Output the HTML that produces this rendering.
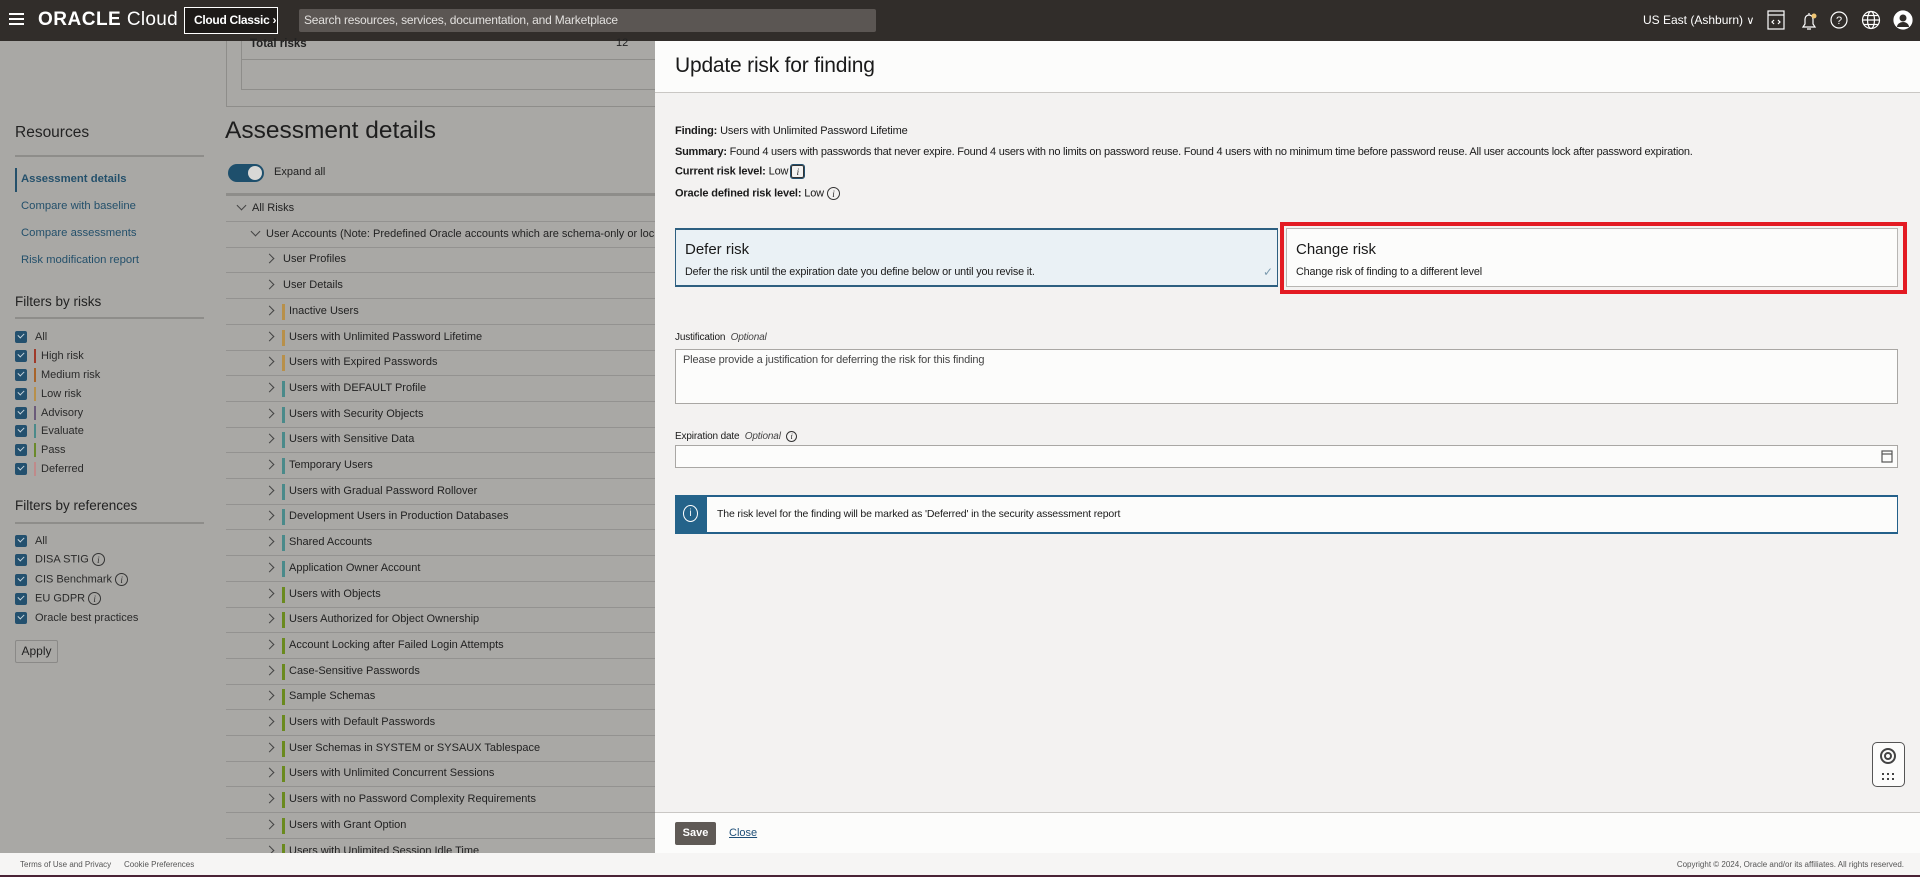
<!DOCTYPE html>
<html><head><meta charset="utf-8"><style>
*{box-sizing:border-box;margin:0;padding:0}
body{width:1920px;height:877px;overflow:hidden;font-family:"Liberation Sans",Arial,sans-serif;background:#a9a8a5;position:relative;color:#1a1a1a}
.abs{position:absolute}
.top{left:0;top:0;width:1920px;height:41px;background:#312d2a}
.side a{position:absolute;left:21px;font-size:11.3px;color:#24506b;text-decoration:none;white-space:nowrap}
.h{position:absolute;font-size:15.5px;color:#222}
.line{position:absolute;left:15px;width:189px;height:2px;background:#8e8d8a}
.cb{position:absolute;left:15px;width:12px;height:12px;background:#23506e;border-radius:2px}
.cb:after{content:"";position:absolute;left:3px;top:2px;width:5px;height:3px;border-left:1.5px solid #c9d6dd;border-bottom:1.5px solid #c9d6dd;transform:rotate(-45deg)}
.cl{position:absolute;font-size:11px;color:#2a2a2a;white-space:nowrap}
.bar{position:absolute;width:2px;height:14px}
.row{position:absolute;left:226px;width:429px;height:26px;border-bottom:1px solid #939290;font-size:11px;color:#222;white-space:nowrap}
.row span{position:absolute;top:6px}
.chev{position:absolute;top:8px;width:7px;height:7px;border-right:1.3px solid #444;border-bottom:1.3px solid #444;transform:rotate(-45deg)}
.chevd{transform:rotate(45deg);top:6px}
.rb{position:absolute;top:5px;width:3px;height:16px}
.panel{left:655px;top:41px;width:1265px;height:812px;background:#f3f2f1}
.p{position:absolute;font-size:11px;color:#1a1a1a;white-space:nowrap;letter-spacing:-0.15px}
.info{display:inline-block;width:13px;height:13px;border:1px solid #333;border-radius:50%;font-size:9px;text-align:center;line-height:12px;font-style:italic;font-family:"Liberation Serif",serif;vertical-align:middle}
</style></head><body>
<div class="abs top"></div>
<div class="abs" style="left:9px;top:13px;width:15px;height:2px;background:#fff;box-shadow:0 5px 0 #fff,0 10px 0 #fff"></div>
<div class="abs" style="left:38px;top:9px;color:#fff;font-size:19px;white-space:nowrap;letter-spacing:0.3px"><b style="font-weight:700;letter-spacing:0.5px">ORACLE</b> <span style="font-weight:400">Cloud</span></div>
<div class="abs" style="left:184px;top:7px;width:94px;height:27px;border:1px solid #fff;background:#1d1a18;color:#fff;font-size:12px;font-weight:bold;line-height:25px;padding-left:9px;letter-spacing:-0.3px">Cloud Classic ›</div>
<div class="abs" style="left:299px;top:9px;width:577px;height:23px;background:#5b5653;border-radius:2px;color:#e2e0de;font-size:12px;line-height:23px;padding-left:5px;letter-spacing:-0.2px">Search resources, services, documentation, and Marketplace</div>
<div class="abs" style="left:1643px;top:13px;color:#fff;font-size:12px;white-space:nowrap">US East (Ashburn) <span style="font-size:11px">∨</span></div>
<svg class="abs" style="left:1766px;top:10px" width="150" height="22" viewBox="0 0 150 22" fill="none" stroke="#fff" stroke-width="1.2">
<rect x="2" y="1" width="16" height="18"/><line x1="2" y1="5" x2="18" y2="5"/><path d="M8 10l-2 2 2 2M12 10l2 2-2 2"/>
<path d="M37 17h12l-2-3v-5a4 4 0 0 0-8 0v5zM41 19h4M43 3v2"/><circle cx="48" cy="6" r="2.5" fill="#f0c674" stroke="none"/>
<circle cx="73" cy="10" r="8"/><text x="73" y="14" font-size="11" fill="#fff" stroke="none" text-anchor="middle" font-family="Liberation Sans">?</text>
<circle cx="105" cy="10" r="8.5"/><ellipse cx="105" cy="10" rx="3.5" ry="8.5"/><line x1="96.5" y1="10" x2="113.5" y2="10"/><line x1="98" y1="5.5" x2="112" y2="5.5"/><line x1="98" y1="14.5" x2="112" y2="14.5"/>
<circle cx="137" cy="10" r="9" fill="#fff"/><circle cx="137" cy="8" r="3.5" fill="#312d2a" stroke="none"/><path d="M131 17a6 5 0 0 1 12 0" fill="#312d2a" stroke="none"/>
</svg>

<div class="h" style="left:15px;top:124px">Resources</div>
<div class="line" style="top:155px"></div>
<div class="abs" style="left:15px;top:168px;width:2px;height:24px;background:#24506b"></div>
<div class="side"><a style="top:173px;font-weight:bold">Assessment details</a><a style="top:200px">Compare with baseline</a><a style="top:227px">Compare assessments</a><a style="top:254px">Risk modification report</a></div>
<div class="h" style="left:15px;top:294px;font-size:13.5px">Filters by risks</div>
<div class="line" style="top:317px"></div>
<div class="cb" style="top:331px"></div><div class="cl" style="left:35px;top:331px">All</div>
<div class="cb" style="top:350px"></div><div class="bar" style="left:34px;top:349px;background:#a03a2a"></div><div class="cl" style="left:41px;top:350px">High risk</div>
<div class="cb" style="top:369px"></div><div class="bar" style="left:34px;top:368px;background:#a8642a"></div><div class="cl" style="left:41px;top:369px">Medium risk</div>
<div class="cb" style="top:388px"></div><div class="bar" style="left:34px;top:387px;background:#b8904a"></div><div class="cl" style="left:41px;top:388px">Low risk</div>
<div class="cb" style="top:407px"></div><div class="bar" style="left:34px;top:406px;background:#6a5a7a"></div><div class="cl" style="left:41px;top:407px">Advisory</div>
<div class="cb" style="top:425px"></div><div class="bar" style="left:34px;top:424px;background:#4a8a8a"></div><div class="cl" style="left:41px;top:425px">Evaluate</div>
<div class="cb" style="top:444px"></div><div class="bar" style="left:34px;top:443px;background:#6a8a2a"></div><div class="cl" style="left:41px;top:444px">Pass</div>
<div class="cb" style="top:463px"></div><div class="bar" style="left:34px;top:462px;background:#c08a8a"></div><div class="cl" style="left:41px;top:463px">Deferred</div>
<div class="h" style="left:15px;top:498px;font-size:13.5px">Filters by references</div>
<div class="line" style="top:522px"></div>
<div class="cb" style="top:535px"></div><div class="cl" style="left:35px;top:535px">All</div>
<div class="cb" style="top:554px"></div><div class="cl" style="left:35px;top:553px">DISA STIG <span class="info">i</span></div>
<div class="cb" style="top:574px"></div><div class="cl" style="left:35px;top:573px">CIS Benchmark <span class="info">i</span></div>
<div class="cb" style="top:593px"></div><div class="cl" style="left:35px;top:592px">EU GDPR <span class="info">i</span></div>
<div class="cb" style="top:612px"></div><div class="cl" style="left:35px;top:612px">Oracle best practices</div>
<div class="abs" style="left:15px;top:640px;width:43px;height:23px;border:1px solid #8a8987;border-radius:2px;font-size:12px;line-height:21px;text-align:center;color:#222">Apply</div>

<div class="abs" style="left:226px;top:41px;width:440px;height:66px;border-left:1px solid #8e8d8a;border-bottom:1px solid #8e8d8a"></div>
<div class="abs" style="left:241px;top:41px;width:420px;height:49px;border-left:1px solid #8e8d8a;border-bottom:1px solid #8e8d8a"></div>
<div class="abs" style="left:241px;top:59px;width:420px;height:1px;background:#8e8d8a"></div>
<div class="abs" style="left:250px;top:38px;font-size:11.5px;font-weight:bold;color:#222">Total risks</div>
<div class="abs" style="left:616px;top:37px;font-size:11px;color:#222">12</div>
<div class="abs" style="left:225px;top:117px;font-size:24.5px;color:#1e1e1e">Assessment details</div>
<div class="abs" style="left:228px;top:164px;width:36px;height:18px;border-radius:9px;background:#1e4f6c"></div>
<div class="abs" style="left:248px;top:166px;width:14px;height:14px;border-radius:50%;background:#d8d8d6"></div>
<div class="abs" style="left:274px;top:166px;font-size:11px;color:#222">Expand all</div>
<div class="abs" style="left:226px;top:193px;width:430px;height:3px;background:#8e8d8a"></div>
<div id="rows"></div>

<div class="abs panel">
 <div class="abs" style="left:0;top:0;width:1265px;height:52px;background:#fcfcfb;border-bottom:1px solid #c9c7c4"></div>
 <div class="abs" style="left:20px;top:13px;font-size:21px;color:#1a1a1a;letter-spacing:-0.2px">Update risk for finding</div>
 <div class="p" style="left:20px;top:84px"><b>Finding:</b> Users with Unlimited Password Lifetime</div>
 <div class="p" style="left:20px;top:105px;letter-spacing:-0.25px"><b>Summary:</b> Found 4 users with passwords that never expire. Found 4 users with no limits on password reuse. Found 4 users with no minimum time before password reuse. All user accounts lock after password expiration.</div>
 <div class="p" style="left:20px;top:124px"><b>Current risk level:</b> Low <span class="info" style="border-radius:2px;outline:1px solid #23506e">i</span></div>
 <div class="p" style="left:20px;top:146px"><b>Oracle defined risk level:</b> Low <span class="info">i</span></div>
 <div class="abs" style="left:20px;top:187px;width:603px;height:59px;background:#eaf1f5;border:1px solid #2d5f80;border-width:2px 1px 2px 1px"></div>
 <div class="abs" style="left:30px;top:200px;font-size:15px;color:#1a1a1a">Defer risk</div>
 <div class="p" style="left:30px;top:225px;font-size:10.8px">Defer the risk until the expiration date you define below or until you revise it.</div>
 <div class="abs" style="left:608px;top:224px;font-size:12px;color:#7a9aae">✓</div>
 <div class="abs" style="left:625px;top:181px;width:627px;height:72px;border:4px solid #e31b23"></div>
 <div class="abs" style="left:631px;top:187px;width:612px;height:59px;background:#fcfcfb;border:1px solid #b8b6b3"></div>
 <div class="abs" style="left:641px;top:200px;font-size:15px;color:#1a1a1a">Change risk</div>
 <div class="p" style="left:641px;top:225px;font-size:10.8px">Change risk of finding to a different level</div>
 <div class="p" style="left:20px;top:291px;font-size:10px">Justification &nbsp;<i style="color:#444">Optional</i></div>
 <div class="abs" style="left:20px;top:308px;width:1223px;height:55px;background:#fcfcfb;border:1px solid #a9a7a4"></div>
 <div class="p" style="left:28px;top:313px;color:#444">Please provide a justification for deferring the risk for this finding</div>
 <div class="p" style="left:20px;top:390px;font-size:10px">Expiration date &nbsp;<i style="color:#444">Optional</i> &nbsp;<span class="info" style="width:11px;height:11px;line-height:10px;font-size:8px">i</span></div>
 <div class="abs" style="left:20px;top:404px;width:1223px;height:23px;background:#fcfcfb;border:1px solid #a9a7a4"></div>
 <svg class="abs" style="left:1226px;top:408px" width="12" height="14" fill="none" stroke="#555" stroke-width="1.2"><rect x="1" y="2" width="10" height="11"/><line x1="1" y1="5" x2="11" y2="5"/></svg>
 <div class="abs" style="left:20px;top:454px;width:1223px;height:39px;background:#fcfcfb;border:1px solid #23608a;border-width:2px 1px 2px 1px"></div>
 <div class="abs" style="left:20px;top:454px;width:32px;height:39px;background:#24638a"></div>
 <div class="abs" style="left:28px;top:464px;width:15px;height:17px;border:1.2px solid #fff;border-radius:50%;color:#fff;font-size:10px;text-align:center;line-height:15px">i</div>
 <div class="p" style="left:62px;top:467px;font-size:10.5px">The risk level for the finding will be marked as 'Deferred' in the security assessment report</div>
 <div class="abs" style="left:1217px;top:701px;width:33px;height:45px;background:#fcfcfb;border:1.5px solid #555;border-radius:5px"></div>
 <svg class="abs" style="left:1223px;top:705px" width="20" height="38" fill="none" stroke="#444" stroke-width="2"><circle cx="10" cy="10" r="7"/><circle cx="10" cy="10" r="3"/><path d="M4 28h2M9 28h2M14 28h2M4 33h2M9 33h2M14 33h2"/></svg>
 <div class="abs" style="left:0;top:771px;width:1265px;height:41px;background:#fcfcfb;border-top:1px solid #c9c7c4"></div>
 <div class="abs" style="left:20px;top:781px;width:41px;height:23px;background:#5f5a56;border-radius:2px;color:#fff;font-size:11px;font-weight:bold;text-align:center;line-height:23px">Save</div>
 <div class="abs" style="left:74px;top:786px;font-size:11px;color:#1f4f78;text-decoration:underline">Close</div>
</div>

<div class="abs" style="left:0;top:853px;width:1920px;height:22px;background:#f6f5f4"></div>
<div class="abs" style="left:20px;top:860px;font-size:8px;color:#555">Terms of Use and Privacy</div>
<div class="abs" style="left:124px;top:860px;font-size:8px;color:#555">Cookie Preferences</div>
<div class="abs" style="right:16px;top:860px;font-size:8px;color:#555">Copyright © 2024, Oracle and/or its affiliates. All rights reserved.</div>
<div class="abs" style="left:0;top:875px;width:1920px;height:2px;background:#4a2336"></div>

<script>
var R=[["All Risks",0,""],["User Accounts (Note: Predefined Oracle accounts which are schema-only or locked are not included in this report)",1,""],["User Profiles",2,""],["User Details",2,""],["Inactive Users",2,"#b8904a"],["Users with Unlimited Password Lifetime",2,"#b8904a"],["Users with Expired Passwords",2,"#b8904a"],["Users with DEFAULT Profile",2,"#4a8a8a"],["Users with Security Objects",2,"#4a8a8a"],["Users with Sensitive Data",2,"#4a8a8a"],["Temporary Users",2,"#4a8a8a"],["Users with Gradual Password Rollover",2,"#4a8a8a"],["Development Users in Production Databases",2,"#4a8a8a"],["Shared Accounts",2,"#4a8a8a"],["Application Owner Account",2,"#4a8a8a"],["Users with Objects",2,"#6a8a1e"],["Users Authorized for Object Ownership",2,"#6a8a1e"],["Account Locking after Failed Login Attempts",2,"#6a8a1e"],["Case-Sensitive Passwords",2,"#6a8a1e"],["Sample Schemas",2,"#6a8a1e"],["Users with Default Passwords",2,"#6a8a1e"],["User Schemas in SYSTEM or SYSAUX Tablespace",2,"#6a8a1e"],["Users with Unlimited Concurrent Sessions",2,"#6a8a1e"],["Users with no Password Complexity Requirements",2,"#6a8a1e"],["Users with Grant Option",2,"#6a8a1e"],["Users with Unlimited Session Idle Time",2,"#6a8a1e"]];
var h="";R.forEach(function(r,i){var top=196+i*25.7;var cx=[238,252,266][r[1]];var tx=[252,266,r[2]?289:283][r[1]];
h+='<div class="row" style="top:'+top+'px;overflow:hidden"><i class="chev'+(r[1]<2?' chevd':'')+'" style="left:'+(cx-226)+'px"></i>'+(r[2]?'<i class="rb" style="left:56px;background:'+r[2]+'"></i>':'')+'<span style="left:'+(tx-226)+'px">'+r[0]+'</span></div>';});
document.getElementById("rows").innerHTML=h;
</script>
</body></html>
